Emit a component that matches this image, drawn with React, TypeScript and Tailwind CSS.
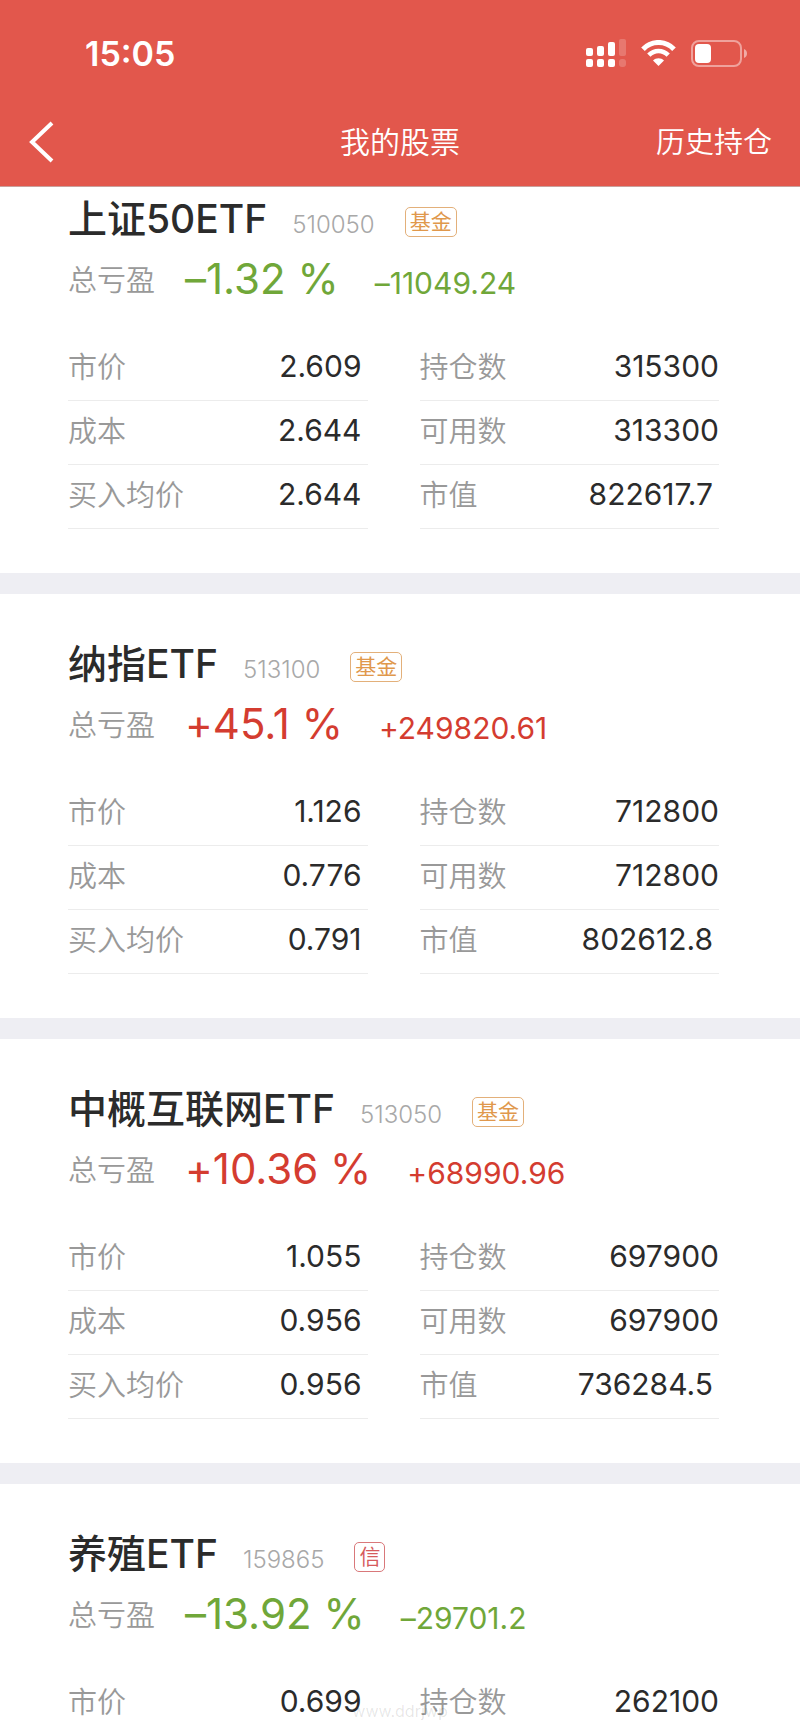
import React from 'react';

type Tone = 'up' | 'down';

interface Holding {
  name: string;
  code: string;
  tag: string;
  tagClass: string;
  tone: Tone;
  percent: string;
  profit: string;
  price: string;
  cost?: string;
  avgPrice?: string;
  amount: string;
  available?: string;
  value?: string;
}

const fundTag = 'border-[#e3b07a] text-[#e0984c]';
const creditTag = 'border-[#d9787a] text-[#d65a5c]';

const holdings: Holding[] = [
  {
    name: '上证50ETF', code: '510050', tag: '基金', tagClass: fundTag,
    tone: 'down', percent: '–1.32 %', profit: '–11049.24',
    price: '2.609', cost: '2.644', avgPrice: '2.644',
    amount: '315300', available: '313300', value: '822617.7',
  },
  {
    name: '纳指ETF', code: '513100', tag: '基金', tagClass: fundTag,
    tone: 'up', percent: '+45.1 %', profit: '+249820.61',
    price: '1.126', cost: '0.776', avgPrice: '0.791',
    amount: '712800', available: '712800', value: '802612.8',
  },
  {
    name: '中概互联网ETF', code: '513050', tag: '基金', tagClass: fundTag,
    tone: 'up', percent: '+10.36 %', profit: '+68990.96',
    price: '1.055', cost: '0.956', avgPrice: '0.956',
    amount: '697900', available: '697900', value: '736284.5',
  },
  {
    name: '养殖ETF', code: '159865', tag: '信', tagClass: creditTag,
    tone: 'down', percent: '–13.92 %', profit: '–29701.2',
    price: '0.699', amount: '262100',
  },
];

const SignalIcon = () => (
  <svg className="w-10 h-7" viewBox="0 0 40 28" fill="white" aria-hidden="true">
    <rect x="0" y="9" width="7" height="8" rx="2" />
    <rect x="11" y="7" width="7" height="10" rx="2" />
    <rect x="22" y="3" width="7" height="14" rx="2" />
    <rect x="33" y="0" width="7" height="17" rx="2" opacity="0.2" />
    <rect x="0" y="20" width="7" height="8" rx="2" />
    <rect x="11" y="20" width="7" height="8" rx="2" />
    <rect x="22" y="20" width="7" height="8" rx="2" />
    <rect x="33" y="20" width="7" height="8" rx="3" opacity="0.2" />
  </svg>
);

const WifiIcon = () => (
  <svg className="w-[35px] h-[26px]" viewBox="0 0 35 26" fill="none" stroke="white" aria-hidden="true">
    <path d="M2 9.2 C10.5 0.2 24.5 0.2 33 9.2" strokeWidth="5" />
    <path d="M7.8 15.2 C13.3 9.6 21.7 9.6 27.2 15.2" strokeWidth="4.6" />
    <path d="M17.5 26 L12 20.4 C15 17.6 20 17.6 23 20.4 Z" fill="white" stroke="none" />
  </svg>
);

const BatteryIcon = () => (
  <svg className="w-14 h-[27px]" viewBox="0 0 56 27" fill="none" aria-hidden="true">
    <rect x="1" y="1" width="49" height="25" rx="7" stroke="white" strokeOpacity="0.45" strokeWidth="2" />
    <rect x="4" y="4" width="16" height="19" rx="4" fill="white" />
    <path d="M53 9 C57 10.5 57 16.5 53 18 Z" fill="white" opacity="0.5" />
  </svg>
);

const Row = ({ label, value, inset }: { label: string; value: string; inset?: boolean }) => (
  <div className="flex h-16 items-center justify-between border-b border-[#ececec] pb-1">
    <dt className="pt-[2px] text-[29px] font-[350] text-[#999999]">{label}</dt>
    <dd className={`text-[30px] text-[#2b2b2b] ${inset ? 'pr-[6px]' : ''}`}>{value}</dd>
  </div>
);

const HoldingCard = ({ item }: { item: Holding }) => {
  const toneClass = item.tone === 'up' ? 'text-[#d43c30]' : 'text-[#70a739]';

  return (
    <section className="border-b-[21px] border-[#eeeef3] bg-white pl-[68px] pr-[81px] pt-[46px] pb-11">
      <div className="flex h-12 items-center">
        <h2 className="text-[39px] font-medium text-[#2b2b2b]">{item.name}</h2>
        <span className="ml-[25px] pt-3 text-[24px] font-light text-[#a8a8a8]">{item.code}</span>
        <span className="ml-[30px] pt-[6px]">
          <span className={`flex h-[30px] items-center rounded-[5px] border px-1 text-[21px] ${item.tagClass}`}>
            {item.tag}
          </span>
        </span>
      </div>
      <div className="flex h-[70px] items-center">
        <span className="pt-[6px] text-[29px] font-[350] text-[#999999]">总亏盈</span>
        <span className={`ml-[30px] text-[42px] [font-feature-settings:'calt'_0] ${toneClass}`}>{item.percent}</span>
        <span className={`ml-9 pt-[10px] text-[30px] [font-feature-settings:'calt'_0] ${toneClass}`}>{item.profit}</span>
      </div>
      <div className="mt-6 grid grid-cols-2 gap-[52px]">
        <dl>
          <Row label="市价" value={item.price} inset />
          {item.cost && <Row label="成本" value={item.cost} inset />}
          {item.avgPrice && <Row label="买入均价" value={item.avgPrice} inset />}
        </dl>
        <dl>
          <Row label="持仓数" value={item.amount} />
          {item.available && <Row label="可用数" value={item.available} />}
          {item.value && <Row label="市值" value={item.value} inset />}
        </dl>
      </div>
    </section>
  );
};

const App = () => {
  return (
    <div className="relative h-screen overflow-hidden bg-white font-['Inter','Noto_Sans_CJK_SC',sans-serif]">
      <header className="relative z-10 border-b border-[#c9a09c] bg-[#e2574c] text-white">
        <div className="flex h-[106px] items-center justify-between pl-[85px] pr-[53px]">
          <span className="text-[34px] font-semibold">15:05</span>
          <div className="flex items-center gap-[15px]">
            <SignalIcon />
            <WifiIcon />
            <BatteryIcon />
          </div>
        </div>
        <nav className="grid h-20 grid-cols-3 items-center pb-2 pl-7 pr-7">
          <button type="button" aria-label="返回" className="justify-self-start">
            <svg className="h-[42px] w-[26px]" viewBox="0 0 26 42" fill="none" stroke="white" strokeWidth="4" aria-hidden="true">
              <path d="M24 2 L4 21 L24 40" />
            </svg>
          </button>
          <h1 className="justify-self-center text-[30px] font-[350]">我的股票</h1>
          <a href="#history" className="justify-self-end pt-[2px] text-[29px] font-[350]">历史持仓</a>
        </nav>
      </header>

      {/* list is scrolled a little under the header */}
      <main className="-mt-[38px]">
        {holdings.map((item) => (
          <HoldingCard key={item.code} item={item} />
        ))}
      </main>

      <div className="absolute inset-x-0 bottom-2 text-center text-base text-black/10">www.ddrjwp</div>
    </div>
  );
};

export default App;
